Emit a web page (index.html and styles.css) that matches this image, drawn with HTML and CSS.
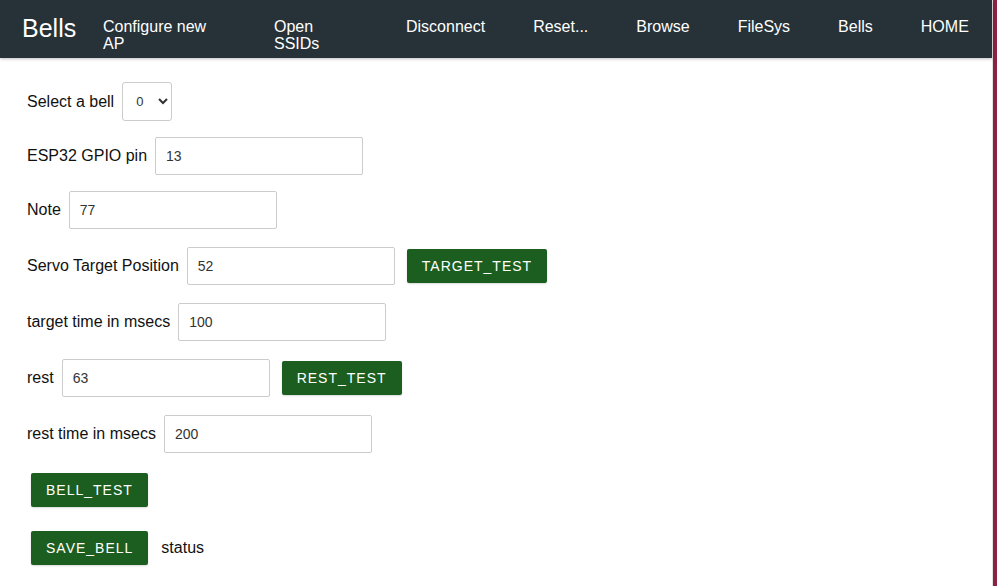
FILE: index.html
```html
<!DOCTYPE html>
<html lang="en">
<head>
<meta charset="utf-8">
<title>Bells</title>
<link rel="stylesheet" href="styles.css">
</head>
<body>
<div class="page">
  <div class="main">
    <nav class="navbar">
      <a class="brand" href="#">Bells</a>
      <ul class="nav-links">
        <li class="nav-item w-configure"><a href="#">Configure new AP</a></li>
        <li class="nav-item w-open"><a href="#">Open SSIDs</a></li>
        <li class="nav-item"><a href="#">Disconnect</a></li>
        <li class="nav-item"><a href="#">Reset...</a></li>
        <li class="nav-item"><a href="#">Browse</a></li>
        <li class="nav-item"><a href="#">FileSys</a></li>
        <li class="nav-item"><a href="#">Bells</a></li>
        <li class="nav-item"><a href="#">HOME</a></li>
      </ul>
    </nav>
    <form class="content">
      <div class="row gap-16">
        <label class="lbl">Select a bell</label>
        <select class="sel"><option>0</option></select>
      </div>
      <div class="row gap-16">
        <label class="lbl">ESP32 GPIO pin</label>
        <input class="inp" type="text" value="13">
      </div>
      <div class="row">
        <label class="lbl">Note</label>
        <input class="inp" type="text" value="77">
      </div>
      <div class="row">
        <label class="lbl">Servo Target Position</label>
        <input class="inp" type="text" value="52">
        <button class="btn" type="button">TARGET_TEST</button>
      </div>
      <div class="row">
        <label class="lbl">target time in msecs</label>
        <input class="inp" type="text" value="100">
      </div>
      <div class="row">
        <label class="lbl">rest</label>
        <input class="inp" type="text" value="63">
        <button class="btn" type="button">REST_TEST</button>
      </div>
      <div class="row gap-20">
        <label class="lbl">rest time in msecs</label>
        <input class="inp" type="text" value="200">
      </div>
      <div class="row gap-24">
        <button class="btn" type="button">BELL_TEST</button>
      </div>
      <div class="row">
        <button class="btn" type="button">SAVE_BELL</button>
        <span class="status">status</span>
      </div>
    </form>
  </div>
  <div class="side-strip"></div>
</div>
</body>
</html>
```

FILE: styles.css
```css
* { box-sizing: border-box; }
html, body { margin: 0; padding: 0; }
body {
  font-family: "Liberation Sans", Arial, sans-serif;
  color: #111;
  background: #fff;
  overflow: hidden;
}
.page {
  display: flex;
  width: 997px;
  height: 586px;
}
.main {
  flex: 1;
  min-width: 0;
  background: #fff;
}
.side-strip {
  width: 5px;
  background: #8a2241;
  border-left: 1px solid #e2e2e2;
}
.navbar {
  display: flex;
  align-items: flex-start;
  height: 58px;
  background: #263238;
  box-shadow: 0 1px 3px rgba(0,0,0,0.25);
  position: relative;
}
.brand {
  color: #fff;
  text-decoration: none;
  font-size: 25px;
  line-height: 29px;
  padding: 14px 0 0 22px;
  width: 79px;
  flex: none;
}
.nav-links {
  display: flex;
  list-style: none;
  margin: 0;
  padding: 0;
  align-items: flex-start;
}
.nav-item {
  flex: none;
  padding: 18px 24px 0;
  font-size: 16px;
  line-height: 17px;
}
.nav-item a {
  color: #fff;
  text-decoration: none;
  display: block;
}
.w-configure { width: 171px; }
.w-open { width: 132px; }
.content {
  padding: 24px 0 0 27px;
}
.row {
  display: flex;
  align-items: center;
  gap: 8px;
  margin-bottom: 18px;
}
.gap-16 { margin-bottom: 16px; }
.gap-20 { margin-bottom: 20px; }
.gap-24 { margin-bottom: 24px; }
.lbl {
  font-size: 16px;
  color: #111;
}
.inp {
  width: 208px;
  height: 38px;
  border: 1px solid #ccc;
  border-radius: 2px;
  padding: 0 10px;
  font-family: "Liberation Sans", Arial, sans-serif;
  font-size: 14px;
  color: #333;
  background: #fff;
  outline: none;
}
.sel {
  width: 50px;
  height: 39px;
  border: 1px solid #ccc;
  border-radius: 3px;
  padding: 0 0 0 9px;
  font-family: "Liberation Sans", Arial, sans-serif;
  font-size: 13px;
  color: #333;
  background: #fff;
}
.btn {
  height: 34px;
  margin: 0 4px;
  padding: 0 15px;
  border: none;
  border-radius: 2px;
  background: #1b5e20;
  color: #fff;
  font-family: "Liberation Sans", Arial, sans-serif;
  font-size: 14px;
  letter-spacing: 1px;
  text-transform: uppercase;
  box-shadow: 0 1px 2px rgba(0,0,0,0.15);
  cursor: pointer;
}
.row .inp + .btn { margin-left: 4px; }
.status {
  font-size: 16px;
  color: #111;
  margin-left: 1px;
}
```
